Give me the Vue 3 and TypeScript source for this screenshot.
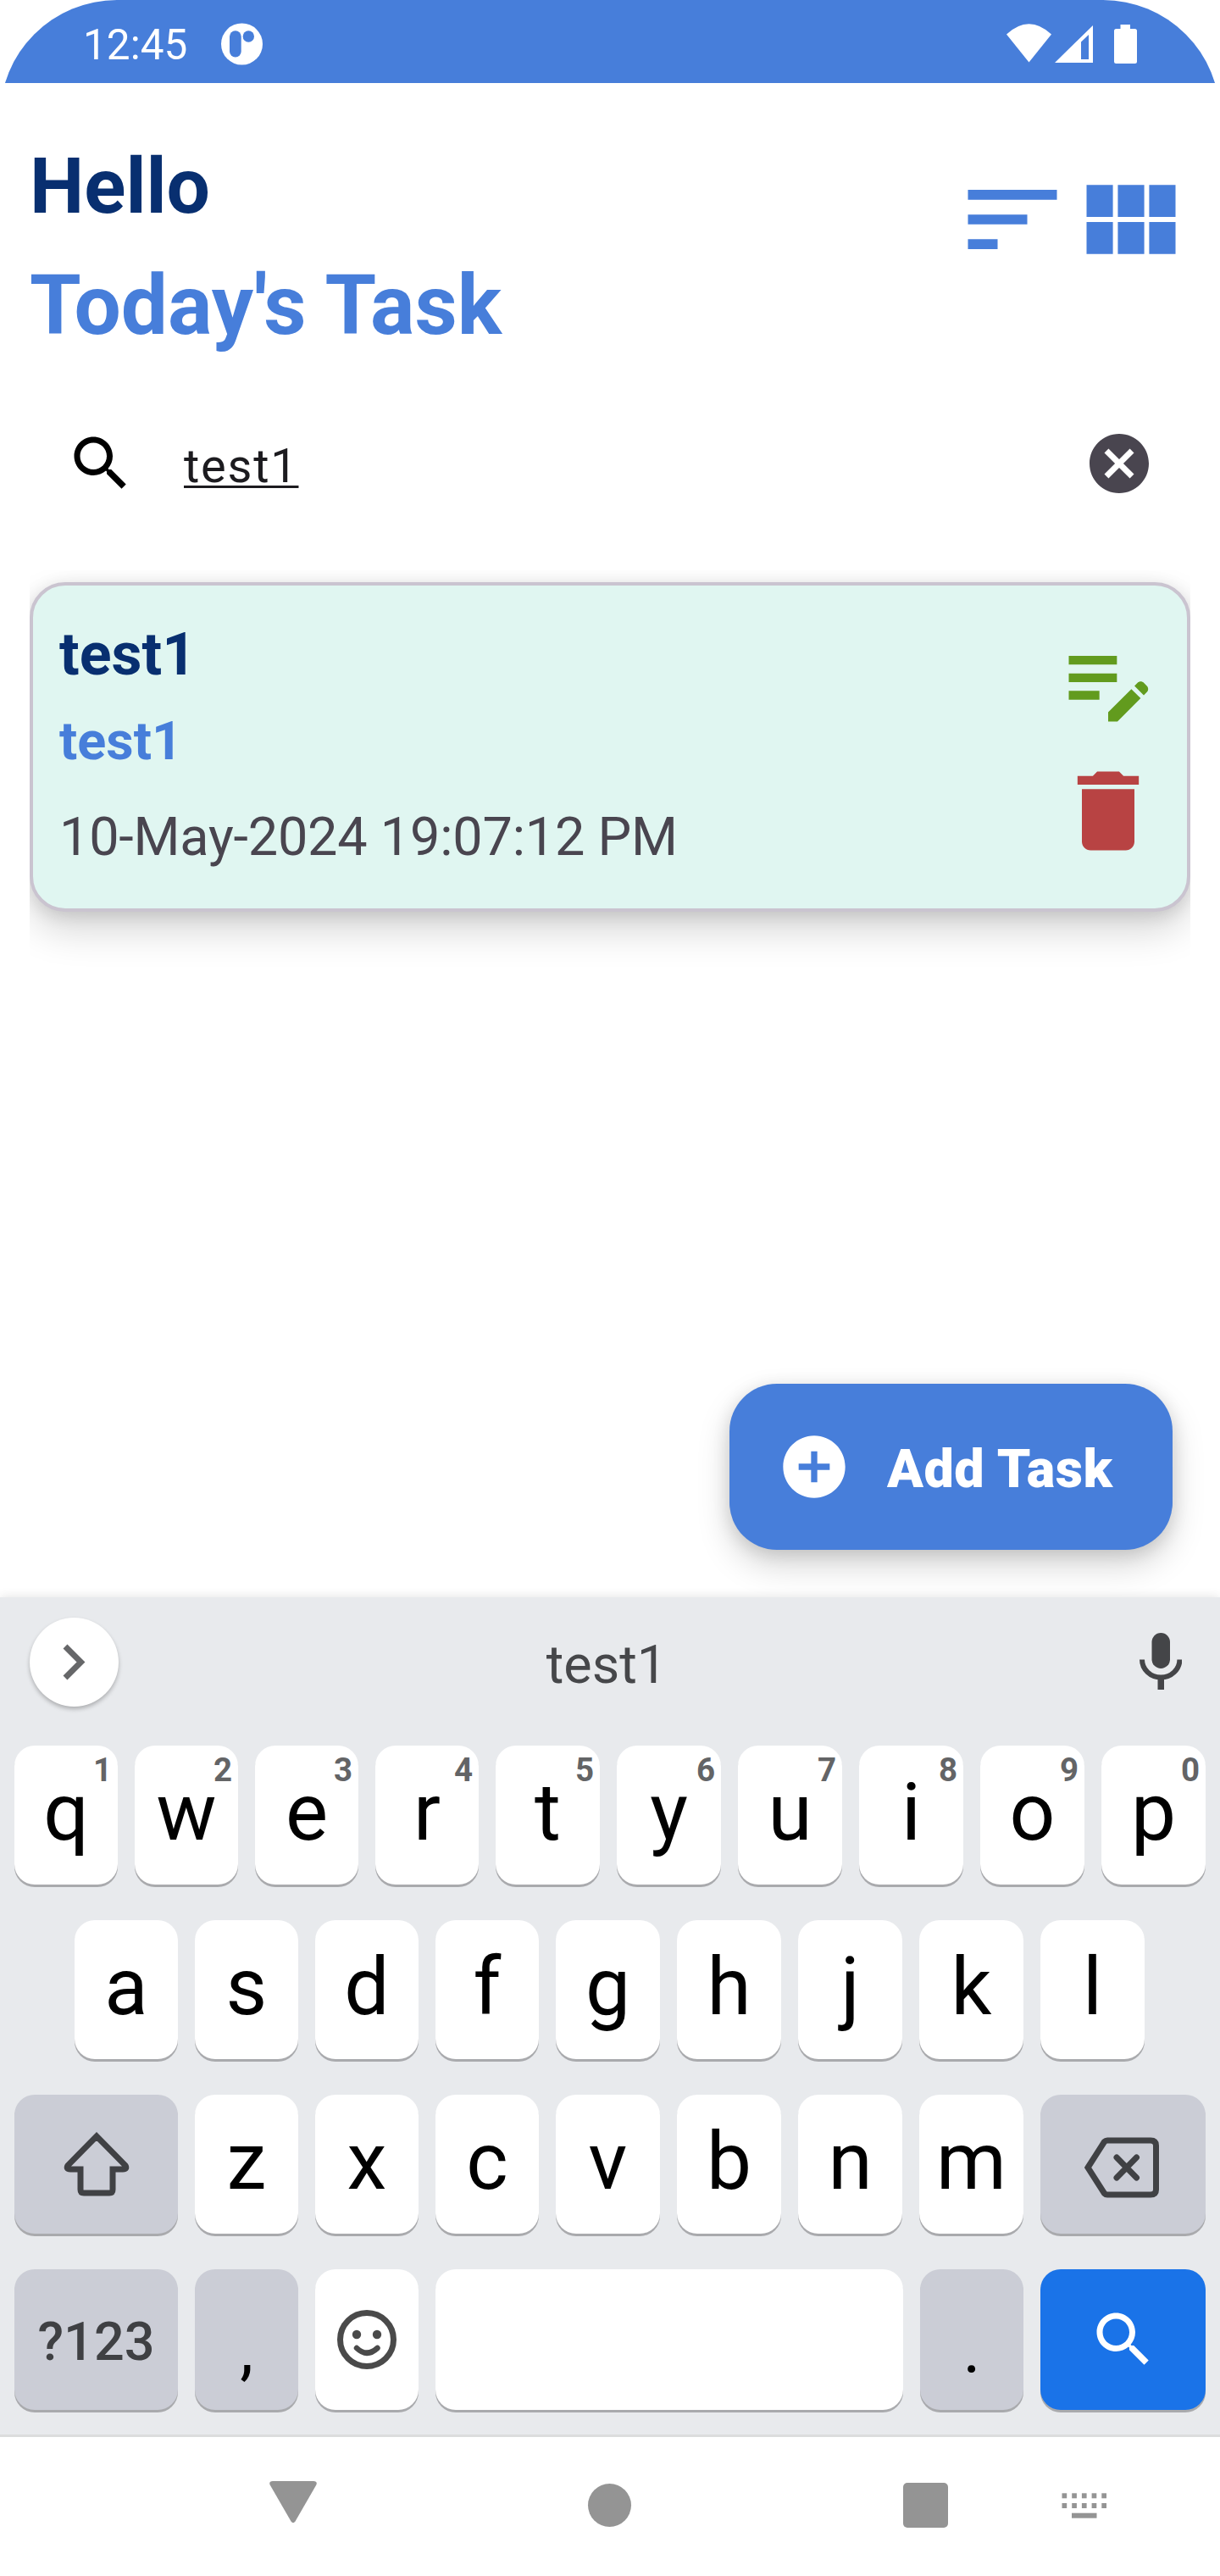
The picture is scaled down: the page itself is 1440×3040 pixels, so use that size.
<script setup lang="ts">
interface Key { label: string; hint?: string }

const topRow: Key[] = 'qwertyuiop'.split('').map((label, i) => ({ label, hint: String((i + 1) % 10) }))
const homeRow: Key[] = 'asdfghjkl'.split('').map((label) => ({ label }))
const bottomRow: Key[] = 'zxcvbnm'.split('').map((label) => ({ label }))

const task = { title: 'test1', description: 'test1', date: '10-May-2024 19:07:12 PM' }
const query = 'test1'
const dotColumns = [0, 1, 2, 3, 4]
</script>

<template>
  <div class="screen">
    <header class="status">
      <span class="clock">12:45</span>
      <svg class="notif" viewBox="0 0 50 50">
        <circle cx="24.500" cy="25" r="24.500" fill="#fff" />
        <rect x="10" y="9.300" width="13.700" height="31.300" rx="6.800" fill="#477eda" />
        <circle cx="32.300" cy="16" r="6.700" fill="#477eda" />
      </svg>
      <svg class="indicators" viewBox="0 0 156 48">
        <path d="M0 12.500Q26.500 -12 53 12.500L26.500 45.500Z" fill="#fff" />
        <path fill-rule="evenodd" d="M57 46 102 2V46ZM88 21.500V42H97V13Z" fill="#fff" />
        <path d="M134.500 1h11.500v5h5.500q2.500 0 2.500 2.500v36q0 2.500-2.500 2.500h-22q-2.500 0-2.500-2.500v-36q0-2.500 2.500-2.500h5z" fill="#fff" />
      </svg>
    </header>

    <main class="app">
      <section class="heading">
        <div>
          <h1 class="hello">Hello</h1>
          <h2 class="today">Today's Task</h2>
        </div>
        <div class="tools">
          <svg viewBox="0 0 24 24"><path d="M3 18h6v-2H3v2zM3 6v2h18V6H3zm0 7h12v-2H3v2z" /></svg>
          <svg viewBox="0 0 24 24"><path d="M14.670 5v6.500H9.330V5h5.340zm1 6.500H21V5h-5.330v6.500zm-1 7.500v-6.500H9.330V19h5.340zm1-6.500V19H21v-6.500h-5.330zm-7.340 0H3V19h5.330v-6.500zm0-1V5H3v6.500h5.330z" /></svg>
        </div>
      </section>

      <section class="search">
        <svg class="ic84" viewBox="0 0 24 24"><path d="M15.500 14h-.79l-.28-.27C15.410 12.590 16 11.110 16 9.500 16 5.910 13.090 3 9.500 3S3 5.910 3 9.500 5.910 16 9.500 16c1.610 0 3.090-.59 4.230-1.570l.27.28v.79l5 4.990L20.490 19l-4.990-5zm-6 0C7.010 14 5 11.990 5 9.500S7.010 5 9.500 5 14 7.010 14 9.500 11.990 14 9.500 14z" /></svg>
        <span class="query">{{ query }}</span>
        <svg class="ic84" viewBox="0 0 24 24"><path fill="#49454f" d="M12 2C6.470 2 2 6.470 2 12s4.470 10 10 10 10-4.470 10-10S17.530 2 12 2zm5 13.590L15.590 17 12 13.410 8.410 17 7 15.590 10.590 12 7 8.410 8.410 7 12 10.590 15.590 7 17 8.410 13.410 12 17 15.590z" /></svg>
      </section>

      <section class="list">
        <article class="card">
          <div class="info">
            <div class="title">{{ task.title }}</div>
            <div class="desc">{{ task.description }}</div>
            <div class="date">{{ task.date }}</div>
          </div>
          <div class="actions">
            <svg viewBox="0 0 24 24"><path fill="#629b1e" d="M3 10h11v2H3v-2zm0-2h11V6H3v2zm0 8h7v-2H3v2zm15.010-3.130.71-.71c.39-.39 1.020-.39 1.410 0l.71.71c.39.39.39 1.020 0 1.410l-.71.71-2.120-2.120zm-.71.71-5.300 5.300V21h2.120l5.300-5.300-2.120-2.120z" /></svg>
            <svg viewBox="0 0 24 24"><path fill="#b84343" d="M6 19c0 1.100.9 2 2 2h8c1.100 0 2-.9 2-2V7H6v12zM19 4h-3.500l-1-1h-5l-1 1H5v2h14V4z" /></svg>
          </div>
        </article>
      </section>

      <div class="fab-row">
        <button class="fab">
          <svg viewBox="0 0 24 24"><path fill="#fff" d="M12 2C6.480 2 2 6.480 2 12s4.480 10 10 10 10-4.480 10-10S17.520 2 12 2zm5 11h-4v4h-2v-4H7v-2h4V7h2v4h4v2z" /></svg>
          <span>Add Task</span>
        </button>
      </div>
    </main>

    <section class="keyboard">
      <div class="suggest">
        <span class="expand"><svg viewBox="0 0 105 105"><path d="M42 34 60.500 52.500 42 71" fill="none" stroke="#666769" stroke-width="7" /></svg></span>
        <span class="word">{{ query }}</span>
        <svg class="mic" viewBox="0 0 50 68">
          <rect x="14.500" y="0" width="21.500" height="42" rx="10.700" fill="#444548" />
          <path d="M3 31.500a22.200 21 0 0 0 44.400 0" fill="none" stroke="#444548" stroke-width="6" />
          <rect x="21.500" y="52" width="7.500" height="15" fill="#444548" />
        </svg>
      </div>

      <div class="rows">
        <div class="row">
          <div v-for="(k, i) in topRow" :key="k.label" class="key" :class="{ plus: i > 3 }">{{ k.label }}<span class="hint">{{ k.hint }}</span></div>
        </div>
        <div class="row home-row">
          <div v-for="(k, i) in homeRow" :key="k.label" class="key" :class="{ plus: i > 3 }">{{ k.label }}</div>
        </div>
        <div class="row">
          <div class="key fn wide">
            <svg class="shift" viewBox="0 0 78 76"><path d="M39 5 5 39.500Q2.500 44 8 44H20V68Q20 72 24 72H54Q58 72 58 68V44H70Q75.500 44 73 39.500Z" fill="none" stroke="#404144" stroke-width="7" /></svg>
          </div>
          <div v-for="(k, i) in bottomRow" :key="k.label" class="key" :class="{ plus: i > 2 }">{{ k.label }}</div>
          <div class="key fn wide end">
            <svg class="back" viewBox="0 0 88 72"><path d="M4 36 23.500 5.500Q25 4 27 4H78Q84.500 4 84.500 10V62Q84.500 68 78 68H27Q25 68 23.500 66.500Z" fill="none" stroke="#404144" stroke-width="7" /><path d="M38 24 61.500 48M61.500 24 38 48" stroke="#404144" stroke-width="7" stroke-linecap="round" /></svg>
          </div>
        </div>
        <div class="row last">
          <div class="key fn wide sym">?123</div>
          <div class="key fn punct">,</div>
          <div class="key icon">
            <svg class="smile" viewBox="0 0 70 70"><circle cx="35" cy="35" r="31.500" fill="none" stroke="#4a4a4a" stroke-width="7" /><circle cx="23" cy="29" r="5.200" fill="#4a4a4a" /><circle cx="47" cy="29" r="5.200" fill="#4a4a4a" /><path d="M23 45Q35 56.500 47.500 45" fill="none" stroke="#4a4a4a" stroke-width="6.500" stroke-linecap="round" /></svg>
          </div>
          <div class="key space"></div>
          <div class="key fn punct">.</div>
          <div class="key go wide end">
            <svg class="ic84" viewBox="0 0 24 24"><path fill="#fff" d="M15.500 14h-.79l-.28-.27C15.410 12.590 16 11.110 16 9.500 16 5.910 13.090 3 9.500 3S3 5.910 3 9.500 5.910 16 9.500 16c1.610 0 3.090-.59 4.230-1.570l.27.28v.79l5 4.990L20.490 19l-4.990-5zm-6 0C7.010 14 5 11.990 5 9.500S7.010 5 9.500 5 14 7.010 14 9.500 11.990 14 9.500 14z" /></svg>
          </div>
        </div>
      </div>
    </section>

    <nav class="navbar">
      <svg class="tri" viewBox="0 0 56 50"><path d="M4 0H52Q57 0 55.300 4.500L30.500 47.500Q28 51 25.500 47.500L.7 4.500Q-1 0 4 0Z" fill="#949494" /></svg>
      <span class="home"></span>
      <span class="recent"></span>
      <svg class="ime" viewBox="0 0 54 30">
        <g fill="#949494">
          <template v-for="c in dotColumns" :key="c">
            <rect :x="c * 11.700 + 0.500" y="0.300" width="5.700" height="6" />
            <rect :x="c * 11.700 + 0.500" y="12" width="5.700" height="6" />
          </template>
          <rect x="12" y="23.700" width="29.500" height="6" />
        </g>
      </svg>
    </nav>
  </div>
</template>

<style>
body { background: #fff; }
</style>

<style scoped>
* { box-sizing: border-box; }
svg { display: block; flex: none; }
.screen {
  width: 1440px; height: 3040px; display: flex; flex-direction: column; overflow: hidden;
  border-radius: 138px 138px 0 0; background: #fff; font-family: Roboto, sans-serif;
}
.status { height: 98px; flex: none; display: flex; align-items: center; padding: 5px 96px 0 98px; background: #477eda; }
.clock { width: 124px; padding-top: 3px; font-size: 49.500px; line-height: 58px; color: #fff; }
.notif { width: 50px; height: 50px; margin-left: 39px; }
.indicators { width: 156px; height: 48px; margin-left: auto; }

.app { height: 1787px; flex: none; display: flex; flex-direction: column; background: #fff; }
.heading { display: flex; justify-content: space-between; padding: 67px 35px 0; height: 386px; }
.hello, .today { margin: 0; font-weight: 700; }
.hello { padding-top: 2px; font-size: 91px; line-height: 107px; color: #082f70; }
.today { margin-top: 29px; font-size: 98px; line-height: 115px; color: #477eda; }
.tools { display: flex; padding-top: 24px; }
.tools svg { width: 140px; height: 140px; }
.tools path { fill: #477eda; }

.search { display: flex; align-items: center; height: 126px; padding: 0 77px; }
.ic84 { width: 84px; height: 84px; }
.query {
  margin-left: 56px; margin-right: auto; font-size: 56px; line-height: 84px; letter-spacing: 1.750px; color: #1c1b1f;
  padding-top: 5px; text-decoration: underline; text-decoration-thickness: 3px; text-underline-offset: 4px; text-decoration-skip-ink: none;
}

.list { margin: 63px 35px 0; padding-top: 14px; height: 480px; overflow: hidden; }
.card {
  display: flex; justify-content: space-between; align-items: center; height: 389px; padding: 0 31px 0 31px;
  border: 4px solid #cac4d0; border-radius: 42px; background: #e0f6f1;
  box-shadow: 0 22px 46px rgba(0, 0, 0, .16), 0 4px 20px rgba(0, 0, 0, .12);
}
.info { display: flex; flex-direction: column; padding-bottom: 7px; }
.title { font-size: 70px; line-height: 84px; font-weight: 700; color: #082f70; }
.desc { margin-top: 22px; font-size: 63px; line-height: 78px; font-weight: 700; color: #477eda; }
.date { margin-top: 35px; font-size: 63px; line-height: 78px; letter-spacing: -.220px; color: #49454f; }
.actions { display: flex; flex-direction: column; gap: 28px; padding-bottom: 2px; }
.actions svg { width: 124px; height: 124px; }

.fab-row { display: flex; justify-content: flex-end; margin-top: auto; padding: 0 56px 56px 0; }
.fab {
  display: flex; align-items: center; width: 523px; height: 196px; padding: 0 0 0 56px; border: 0; border-radius: 56px;
  background: #477eda; color: #fff; font: 900 63px/74px Roboto, sans-serif; letter-spacing: .500px;
  box-shadow: 0 18px 38px rgba(0, 0, 0, .17), 0 4px 20px rgba(0, 0, 0, .12);
}
.fab svg { width: 88px; height: 88px; margin-right: 42px; }
.fab span { padding-top: 5px; }

.keyboard { height: 991px; flex: none; background: #e8eaed; border-bottom: 3px solid #dcdddd; box-shadow: 0 0 12px rgba(0, 0, 0, .12); }
.suggest { display: flex; align-items: center; justify-content: space-between; height: 175px; padding: 0 45px 23px 35px; }
.expand { width: 105px; height: 105px; border-radius: 50%; background: #fff; box-shadow: 0 3px 5px rgba(0, 0, 0, .25); }
.word { font-size: 63px; line-height: 74px; color: #46474a; padding: 7px 0 0 2px; }
.mic { width: 50px; height: 68px; margin-left: 55px; }
.rows { display: flex; flex-direction: column; gap: 42px; padding: 0 17px; }
.row { display: flex; gap: 20px; height: 164px; }
.row.home-row { padding-left: 71px; }
.row.last { height: 166px; }
.key {
  position: relative; width: 122px; flex: none; display: flex; align-items: center; justify-content: center; padding-bottom: 7px;
  border-radius: 24px; background: #fff; box-shadow: 0 3px 0 #a9aaad; font-size: 94.500px; color: #000;
}
.key.plus { width: 123px; }
.key.wide { width: 193px; padding: 0; }
.key.wide.end { width: 195px; }
.key.fn { background: #cbcdd6; }
.key.icon { padding: 0; }
.key.space { width: auto; flex: 1; }
.key.go { background: #1a73e8; }
.key.sym { font-size: 63px; font-weight: 500; color: #3f4043; padding-top: 5px; }
.key.punct { font-size: 80px; padding: 24px 0 0; }
.hint { position: absolute; top: 10px; right: 7px; font-size: 38.500px; line-height: 1; font-weight: 700; color: #636466; }
.shift { width: 78px; height: 76px; }
.back { width: 88px; height: 72px; margin: 7px 3px 0 0; }
.smile { width: 70px; height: 70px; }

.navbar { flex: 1; display: flex; align-items: center; padding: 0 133px 0 318px; background: #fff; }
.tri { width: 56px; height: 50px; margin-top: -11px; }
.home { width: 51px; height: 51px; margin-left: 320px; margin-top: -3px; border-radius: 50%; background: #949494; }
.recent { width: 53px; height: 53px; margin-left: 321px; margin-top: -3px; border-radius: 5px; background: #949494; }
.ime { width: 54px; height: 30px; margin-left: auto; margin-top: -3px; }
</style>
